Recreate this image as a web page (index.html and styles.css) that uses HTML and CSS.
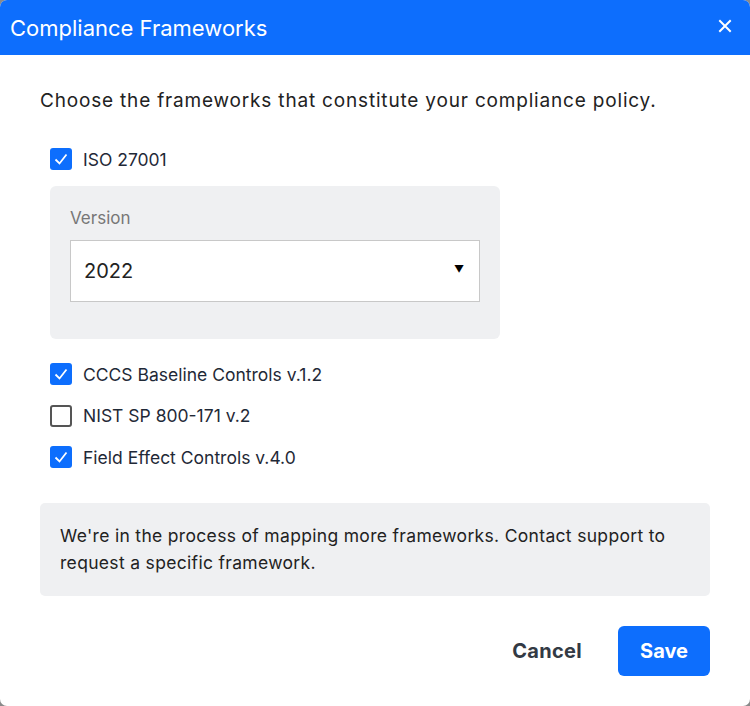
FILE: index.html
```html
<!DOCTYPE html>
<html>
<head>
<meta charset="utf-8">
<link rel="stylesheet" href="styles.css">
</head>
<body>
<div class="dialog">
  <div class="header">
    <div class="title">Compliance Frameworks</div>
    <svg class="close" width="14" height="14" viewBox="0 0 14 14"><path d="M2 2 L12 12 M12 2 L2 12" stroke="#fff" stroke-width="2" stroke-linecap="square"/></svg>
  </div>
  <div class="body">
    <p class="desc">Choose the frameworks that constitute your compliance policy.</p>
    <div class="opt">
      <span class="cb on"><svg width="22" height="22" viewBox="0 0 22 22"><path d="M5.5 11.5 L9.5 15.5 L16.5 6.5" fill="none" stroke="#fff" stroke-width="1.8"/></svg></span>
      <span class="lbl">ISO 27001</span>
    </div>
    <div class="panel">
      <div class="vlabel">Version</div>
      <div class="select"><span>2022</span><span class="arrow">▼</span></div>
    </div>
    <div class="list">
      <div class="opt">
        <span class="cb on"><svg width="22" height="22" viewBox="0 0 22 22"><path d="M5.5 11.5 L9.5 15.5 L16.5 6.5" fill="none" stroke="#fff" stroke-width="1.8"/></svg></span>
        <span class="lbl">CCCS Baseline Controls v.1.2</span>
      </div>
      <div class="opt">
        <span class="cb"></span>
        <span class="lbl">NIST SP 800-171 v.2</span>
      </div>
      <div class="opt">
        <span class="cb on"><svg width="22" height="22" viewBox="0 0 22 22"><path d="M5.5 11.5 L9.5 15.5 L16.5 6.5" fill="none" stroke="#fff" stroke-width="1.8"/></svg></span>
        <span class="lbl">Field Effect Controls v.4.0</span>
      </div>
    </div>
    <div class="info">We're in the process of mapping more frameworks. Contact support to request a specific framework.</div>
    <div class="actions">
      <button class="cancel">Cancel</button>
      <button class="save">Save</button>
    </div>
  </div>
</div>
</body>
</html>
```
FILE: styles.css
```css
html, body {
  margin: 0;
  padding: 0;
  background: #8a8a8a;
}
body {
  font-family: Inter, "Noto Sans", sans-serif;
}
.dialog {
  width: 750px;
  height: 706px;
  background: #fff;
  border-radius: 7px;
  overflow: hidden;
  box-sizing: border-box;
}
.header {
  height: 55px;
  background: #0d6efd;
  display: flex;
  align-items: center;
  justify-content: space-between;
  padding: 0 18px 0 10px;
}
.title {
  color: #fff;
  font-size: 22px;
  font-weight: 400;
  margin-top: 1px;
}
.close {
  margin-top: -4px;
}
.body {
  padding: 34px 40px 0 40px;
}
.desc {
  margin: 0 0 34px 0;
  font-size: 19px;
  letter-spacing: 0.82px;
  color: #222;
  line-height: 24px;
}
.opt {
  display: flex;
  align-items: center;
  margin-left: 10px;
  height: 24px;
}
.cb {
  width: 22px;
  height: 22px;
  box-sizing: border-box;
  border: 2px solid #555;
  border-radius: 3px;
  margin-right: 11px;
  flex: none;
}
.cb.on {
  border: none;
  background: #0d6efd;
}
.cb svg {
  display: block;
}
.lbl {
  font-size: 17.5px;
  color: #1f2937;
}
.panel {
  margin: 15px 0 0 10px;
  width: 450px;
  height: 153px;
  box-sizing: border-box;
  background: #eff0f2;
  border-radius: 6px;
  padding: 21px 20px;
}
.vlabel {
  font-size: 17px;
  color: #777;
  line-height: 22px;
  margin-bottom: 11px;
}
.select {
  height: 62px;
  box-sizing: border-box;
  background: #fff;
  border: 1px solid #c8c8c8;
  display: flex;
  align-items: center;
  justify-content: space-between;
  padding: 0 13px 0 13px;
  font-size: 20px;
  color: #222;
}
.arrow {
  font-size: 10px;
  color: #000;
  margin-top: -4px;
  margin-right: 2px;
}
.list {
  margin-top: 23px;
  display: flex;
  flex-direction: column;
  gap: 17.5px;
}
.info {
  margin-top: 34px;
  background: #eff0f2;
  border-radius: 5px;
  padding: 19px 30px 20px 20px;
  font-size: 17.5px;
  letter-spacing: 0.32px;
  line-height: 27px;
  color: #222;
}
.actions {
  margin-top: 30px;
  display: flex;
  justify-content: flex-end;
  align-items: center;
  gap: 14px;
}
button {
  font-family: Inter, "Noto Sans", sans-serif;
  font-size: 20px;
  font-weight: 700;
  border: none;
  cursor: pointer;
}
.cancel {
  background: transparent;
  color: #333a44;
  padding: 0 22px;
  letter-spacing: 0.3px;
}
.save {
  background: #0d6efd;
  color: #fff;
  width: 92px;
  height: 50px;
  border-radius: 6px;
}
```
